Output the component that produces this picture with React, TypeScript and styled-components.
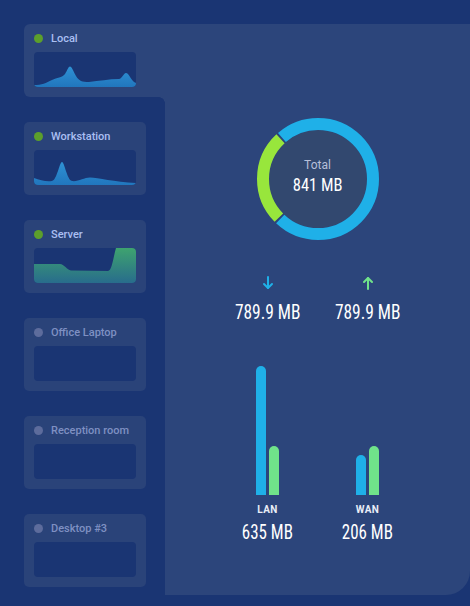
import React from "react";
import styled, { createGlobalStyle } from "styled-components";

const BG = "#1a3573";
const PANEL = "#2c457b";
const CARD = "#2a4379";
const BLUE = "#1fb0e8";
const LIME = "#98e63c";
const MINT = "#70e38a";

const GlobalStyle = createGlobalStyle`
  html, body { margin: 0; padding: 0; background: ${BG}; }
  body { font-family: Roboto, "Noto Sans", "Liberation Sans", sans-serif; }
  * { box-sizing: border-box; }
`;

const condensed = `"Liberation Sans Narrow", "Roboto Condensed", "DejaVu Sans Condensed", "DejaVu Sans", sans-serif`;

const Page = styled.div`
  display: flex;
  width: 470px;
  height: 606px;
  overflow: hidden;
  background: ${BG};
`;

const Sidebar = styled.nav`
  width: 165px;
  flex: none;
  display: flex;
  flex-direction: column;
  gap: 25px;
  padding: 24px 0 0 24px;
`;

const Card = styled.div<{ $active?: boolean }>`
  position: relative;
  height: 73px;
  width: ${(p) => (p.$active ? "141px" : "122px")};
  background: ${(p) => (p.$active ? PANEL : CARD)};
  border-radius: ${(p) => (p.$active ? "6px 0 0 6px" : "5px")};
  padding: 10px 0 0 10px;
  display: flex;
  flex-direction: column;
  gap: 9px;
  ${(p) =>
    p.$active &&
    `
    &::after {
      content: "";
      position: absolute;
      right: 0;
      top: 100%;
      width: 6px;
      height: 6px;
      background: radial-gradient(circle at 0% 100%, transparent 5.5px, ${PANEL} 6px);
    }
  `}
`;

const CardHead = styled.div`
  display: flex;
  align-items: center;
  gap: 8px;
  height: 9px;
`;

const Dot = styled.span<{ $on: boolean }>`
  width: 9px;
  height: 9px;
  border-radius: 50%;
  flex: none;
  background: ${(p) => (p.$on ? "#5c9f2b" : "#5d6c9c")};
`;

const Title = styled.span<{ $on: boolean }>`
  font-size: 11px;
  font-weight: 500;
  line-height: 12px;
  color: ${(p) => (p.$on ? "#aabff2" : "#7f90c2")};
  white-space: nowrap;
`;

const ChartBox = styled.div`
  width: 102px;
  height: 35px;
  border-radius: 4px;
  background: ${BG};
  overflow: hidden;
  svg { display: block; }
`;

const Main = styled.main`
  flex: 1;
  margin-top: 24px;
  height: 571px;
  background: ${PANEL};
  border-bottom-right-radius: 24px;
  display: flex;
  flex-direction: column;
  align-items: center;
  padding-top: 94px;
`;

const DonutWrap = styled.div`
  position: relative;
  width: 122px;
  height: 122px;
  svg { display: block; }
`;

const DonutCenter = styled.div`
  position: absolute;
  inset: 0;
  display: flex;
  flex-direction: column;
  align-items: center;
  justify-content: center;
  padding-bottom: 5px;
`;

const TotalLabel = styled.span`
  font-size: 12px;
  line-height: 14px;
  color: #b6bfd9;
  margin-bottom: 2px;
`;

const BigNumber = styled.span<{ $size?: number }>`
  display: inline-block;
  font-family: ${condensed};
  font-stretch: condensed;
  font-size: ${(p) => p.$size ?? 19}px;
  line-height: 22px;
  color: #ffffff;
  white-space: nowrap;
  transform: scaleX(0.87);
  transform-origin: 50% 50%;
`;

const Columns = styled.div<{ $top: number }>`
  display: grid;
  grid-template-columns: 100px 100px;
  margin-top: ${(p) => p.$top}px;
`;

const Column = styled.div`
  display: flex;
  flex-direction: column;
  align-items: center;
`;

const ArrowBox = styled.div`
  height: 14px;
  margin-bottom: 11px;
  svg { display: block; }
`;

const Bars = styled.div`
  height: 129px;
  display: flex;
  align-items: flex-end;
  gap: 3px;
  margin-bottom: 9px;
`;

const Bar = styled.div<{ $color: string }>`
  width: 10px;
  border-radius: 5px 5px 0 0;
  background: ${(p) => p.$color};
`;

const BarLabel = styled.span`
  font-size: 10px;
  font-weight: 700;
  line-height: 12px;
  letter-spacing: 0.4px;
  color: #e9edf7;
  margin-bottom: 6px;
`;

type Device = { name: string; on: boolean; chart?: "local" | "work" | "server" };

const devices: Device[] = [
  { name: "Local", on: true, chart: "local" },
  { name: "Workstation", on: true, chart: "work" },
  { name: "Server", on: true, chart: "server" },
  { name: "Office Laptop", on: false },
  { name: "Reception room", on: false },
  { name: "Desktop #3", on: false },
];

const chartPaths: Record<string, string> = {
  local:
    "M0,33 C8,33 12,31 18,28 C23,25.5 28,26 31,22 C33.5,18 34.5,14.5 36,14.5 C37.8,14.5 39,18.5 42,24 C45,29 48,30 55,30 C65,29 75,27 85,27 C88,27 89.5,21 92,21 C94.5,21 96,26 100,30 L102,31 L102,35 L0,35 Z",
  work:
    "M0,28 C6,30 12,32 18,31 C23,30 25.5,12 28,12 C30.5,12 33,30 38,31 C44,32 50,27.5 56,27.5 C64,27.5 80,32 102,33 L102,35 L0,35 Z",
  server:
    "M0,16 L26,16 C30,16 33,22 37,22.5 L74,23 C78,23 79.5,8 82,0 L102,0 L102,35 L0,35 Z",
};

function MiniChart({ kind }: { kind?: string }) {
  if (!kind) return <ChartBox />;
  const green = kind === "server";
  const id = `g-${kind}`;
  return (
    <ChartBox>
      <svg width="102" height="35" viewBox="0 0 102 35" preserveAspectRatio="none">
        <defs>
          <linearGradient id={id} x1="0" y1="0" x2="0" y2="1">
            {green ? (
              <>
                <stop offset="0" stopColor="#3ea36f" />
                <stop offset="1" stopColor="#286c8c" />
              </>
            ) : (
              <>
                <stop offset="0" stopColor="#2f92d4" />
                <stop offset="1" stopColor="#2176bd" />
              </>
            )}
          </linearGradient>
        </defs>
        <path d={chartPaths[kind]} fill={`url(#${id})`} />
      </svg>
    </ChartBox>
  );
}

function Donut() {
  const r = 55;
  const C = 2 * Math.PI * r;
  const seg = (start: number, sweep: number) => {
    const len = (sweep / 360) * C;
    return {
      strokeDasharray: `${len} ${C - len}`,
      strokeDashoffset: -(start / 360) * C,
    };
  };
  return (
    <DonutWrap>
      <svg width="122" height="122" viewBox="0 0 122 122">
        <circle cx="61" cy="61" r="49" fill="#32486f" />
        <g transform="rotate(-90 61 61)">
          <circle cx="61" cy="61" r={r} fill="none" stroke={LIME} strokeWidth="12" {...seg(225, 91.5)} />
          <circle cx="61" cy="61" r={r} fill="none" stroke={BLUE} strokeWidth="12" {...seg(318.5, 264.5)} />
        </g>
      </svg>
      <DonutCenter>
        <TotalLabel>Total</TotalLabel>
        <BigNumber $size={19}>841 MB</BigNumber>
      </DonutCenter>
    </DonutWrap>
  );
}

function Arrow({ up, color }: { up?: boolean; color: string }) {
  return (
    <svg width="12" height="14" viewBox="0 0 12 14" fill="none" stroke={color} strokeWidth="2" strokeLinecap="round" strokeLinejoin="round">
      {up ? (
        <>
          <path d="M6 13V2" />
          <path d="M2 6l4-4 4 4" />
        </>
      ) : (
        <>
          <path d="M6 1v11" />
          <path d="M2 8l4 4 4-4" />
        </>
      )}
    </svg>
  );
}

export default function App() {
  return (
    <>
      <GlobalStyle />
      <Page>
        <Sidebar>
          {devices.map((d, i) => (
            <Card key={d.name} $active={i === 0}>
              <CardHead>
                <Dot $on={d.on} />
                <Title $on={d.on}>{d.name}</Title>
              </CardHead>
              <MiniChart kind={d.chart} />
            </Card>
          ))}
        </Sidebar>
        <Main>
          <Donut />
          <Columns $top={36}>
            <Column>
              <ArrowBox>
                <Arrow color={BLUE} />
              </ArrowBox>
              <BigNumber $size={20}>789.9 MB</BigNumber>
            </Column>
            <Column>
              <ArrowBox>
                <Arrow up color={MINT} />
              </ArrowBox>
              <BigNumber $size={20}>789.9 MB</BigNumber>
            </Column>
          </Columns>
          <Columns $top={43}>
            <Column>
              <Bars>
                <Bar $color={BLUE} style={{ height: 129 }} />
                <Bar $color={MINT} style={{ height: 49 }} />
              </Bars>
              <BarLabel>LAN</BarLabel>
              <BigNumber $size={19.5}>635 MB</BigNumber>
            </Column>
            <Column>
              <Bars>
                <Bar $color={BLUE} style={{ height: 40 }} />
                <Bar $color={MINT} style={{ height: 49 }} />
              </Bars>
              <BarLabel>WAN</BarLabel>
              <BigNumber $size={19.5}>206 MB</BigNumber>
            </Column>
          </Columns>
        </Main>
      </Page>
    </>
  );
}
